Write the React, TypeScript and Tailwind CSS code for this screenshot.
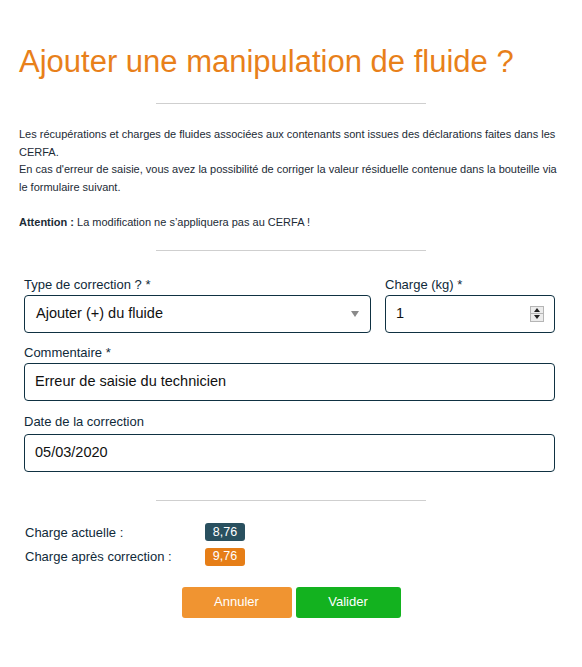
export default function App() {
  const fieldBox =
    "h-[38px] w-full rounded-[4px] border border-[#0f3142] bg-white px-[10px] flex items-center text-[14.5px] text-[#111]";
  const labelCls = "block text-[13px] leading-[18px] text-[#0f2a3a] mb-[1px]";

  return (
    <div
      className="min-h-[667px] w-full bg-white px-[19px] pt-[45px]"
      style={{ fontFamily: '"Liberation Sans", Arial, sans-serif' }}
    >
      {/* titre */}
      <h1 className="text-[31px] leading-[34px] text-[#e8801a]">
        Ajouter une manipulation de fluide ?
      </h1>

      <hr className="mx-auto mt-[24px] w-[270px] border-t border-[#cfcfcf]" />

      {/* Texte d'information */}
      <div className="mt-[22px] text-[11px] leading-[17.6px] text-[#1c2b36]">
        <p className="mb-[17.6px]">
          Les récupérations et charges de fluides associées aux contenants sont issues des déclarations faites dans les
          CERFA.
          <br />
          En cas d'erreur de saisie, vous avez la possibilité de corriger la valeur résiduelle contenue dans la bouteille via
          le formulaire suivant.
        </p>
        <p>
          <span className="font-bold">Attention :</span> La modification ne s’appliquera pas au CERFA !
        </p>
      </div>

      <hr className="mx-auto mt-[18px] w-[270px] border-t border-[#cfcfcf]" />

      {/* Formulaire */}
      <div className="mt-[25px] pl-[5px] pr-[8px]">
        <div className="flex gap-[14px]">
          <div className="flex-1">
            <label className={labelCls}>Type de correction ? *</label>
            <div className={fieldBox + " justify-between pl-[11px]"}>
              <span>Ajouter (+) du fluide</span>
              <svg width="8" height="6" viewBox="0 0 8 6" className="mr-[1px]">
                <path d="M0 0 L8 0 L4 6 Z" fill="#8a8a8a" />
              </svg>
            </div>
          </div>
          <div className="w-[170px]">
            <label className={labelCls}>Charge (kg) *</label>
            <div className={fieldBox + " justify-between"}>
              <span>1</span>
              <div className="flex h-[16px] w-[14px] flex-col border border-[#b5b5b5] bg-[#ececec]">
                <div className="flex flex-1 items-center justify-center border-b border-[#b5b5b5]">
                  <svg width="6" height="4" viewBox="0 0 6 4">
                    <path d="M0 4 L6 4 L3 0 Z" fill="#222" />
                  </svg>
                </div>
                <div className="flex flex-1 items-center justify-center">
                  <svg width="6" height="4" viewBox="0 0 6 4">
                    <path d="M0 0 L6 0 L3 4 Z" fill="#222" />
                  </svg>
                </div>
              </div>
            </div>
          </div>
        </div>

        <div className="mt-[11px]">
          <label className={labelCls}>Commentaire *</label>
          <div className={fieldBox}>Erreur de saisie du technicien</div>
        </div>

        <div className="mt-[12px]">
          <label className="mb-[3px] block text-[13px] leading-[18px] text-[#0f2a3a]">Date de la correction</label>
          <div className={fieldBox}>05/03/2020</div>
        </div>
      </div>

      <hr className="mx-auto mt-[28px] w-[270px] border-t border-[#cfcfcf]" />

      {/* Charges */}
      <div className="mt-[22px] flex flex-col gap-[5px] pl-[6px] text-[13px] text-[#0f2a3a]">
        <div className="flex items-center">
          <span className="w-[180px]">Charge actuelle :</span>
          <span className="flex h-[18px] w-[40px] items-center justify-center rounded-[3px] bg-[#29505f] text-[12.5px] text-white">
            8,76
          </span>
        </div>
        <div className="flex items-center">
          <span className="w-[180px]">Charge après correction :</span>
          <span className="flex h-[18px] w-[40px] items-center justify-center rounded-[3px] bg-[#e67e17] text-[12.5px] text-white">
            9,76
          </span>
        </div>
      </div>

      {/* Boutons */}
      <div className="mt-[20px] flex justify-center gap-[4px]">
        <button className="h-[31px] w-[110px] rounded-[3px] bg-[#f09431] text-[13px] text-white">
          Annuler
        </button>
        <button className="h-[31px] w-[105px] rounded-[3px] bg-[#13b21f] text-[13px] text-white">
          Valider
        </button>
      </div>
    </div>
  );
}
